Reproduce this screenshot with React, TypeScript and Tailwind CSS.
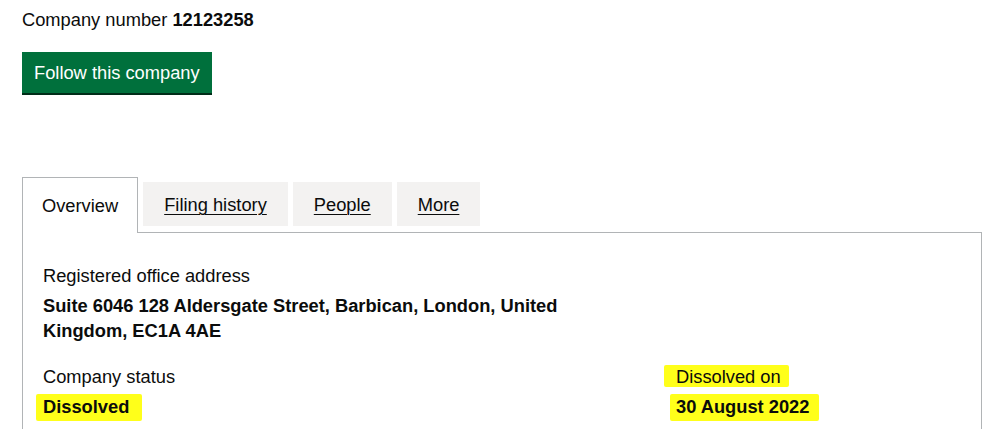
import React from 'react';

const font = { fontFamily: '"Liberation Sans", Arial, sans-serif' };

function Highlight({ children, className }: { children: React.ReactNode; className: string }) {
  return (
    <span className="relative isolate inline-block">
      <span className={`absolute -z-10 bg-[#ffff1a] rounded-[2px] ${className}`} />
      {children}
    </span>
  );
}

const tabs = ['Filing history', 'People', 'More'];

export default function App() {
  return (
    <div style={font} className="bg-white text-[#0b0c0c] px-[22px] pt-[7px] text-[18.3px] leading-[25px] min-h-[429px] w-[998px] overflow-hidden">
      <p>
        Company number <strong className="font-bold">12123258</strong>
      </p>

      <button className="mt-[20px] h-[41px] px-[12px] bg-[#00703c] text-white text-[18.3px] shadow-[0_2px_0_#002d18]">
        Follow this company
      </button>

      <div className="mt-[84px] w-[960px]">
        <ul className="flex items-start">
          <li className="relative z-10 h-[56px] px-[19px] pt-[15px] mr-[5px] bg-white border border-b-0 border-[#b1b4b6]">
            Overview
          </li>
          {tabs.map((t) => (
            <li key={t} className="mt-[5px] h-[44px] px-[21px] pt-[10px] mr-[5px] bg-[#f3f2f1]">
              <a href="#" className="underline underline-offset-[3px] decoration-1">
                {t}
              </a>
            </li>
          ))}
        </ul>

        <div className="-mt-px border border-b-0 border-[#b1b4b6] px-[20px] pt-[30px] pb-[20px]">
          <p>Registered office address</p>
          <p className="mt-[5px] font-bold w-[560px]">
            Suite 6046 128 Aldersgate Street, Barbican, London, United Kingdom, EC1A 4AE
          </p>

          <div className="mt-[21px] flex">
            <div className="w-[633px]">
              <p>Company status</p>
              <p className="mt-[5px] font-bold">
                <Highlight className="-left-[7px] -right-[13px] top-[0px] bottom-[-2px]">Dissolved</Highlight>
              </p>
            </div>
            <div>
              <p>
                <Highlight className="-left-[12px] -right-[8px] top-[1px] bottom-[2px]">Dissolved on</Highlight>
              </p>
              <p className="mt-[5px] font-bold">
                <Highlight className="-left-[6px] -right-[10px] top-[0px] bottom-[-2px]">30 August 2022</Highlight>
              </p>
            </div>
          </div>
        </div>
      </div>
    </div>
  );
}
